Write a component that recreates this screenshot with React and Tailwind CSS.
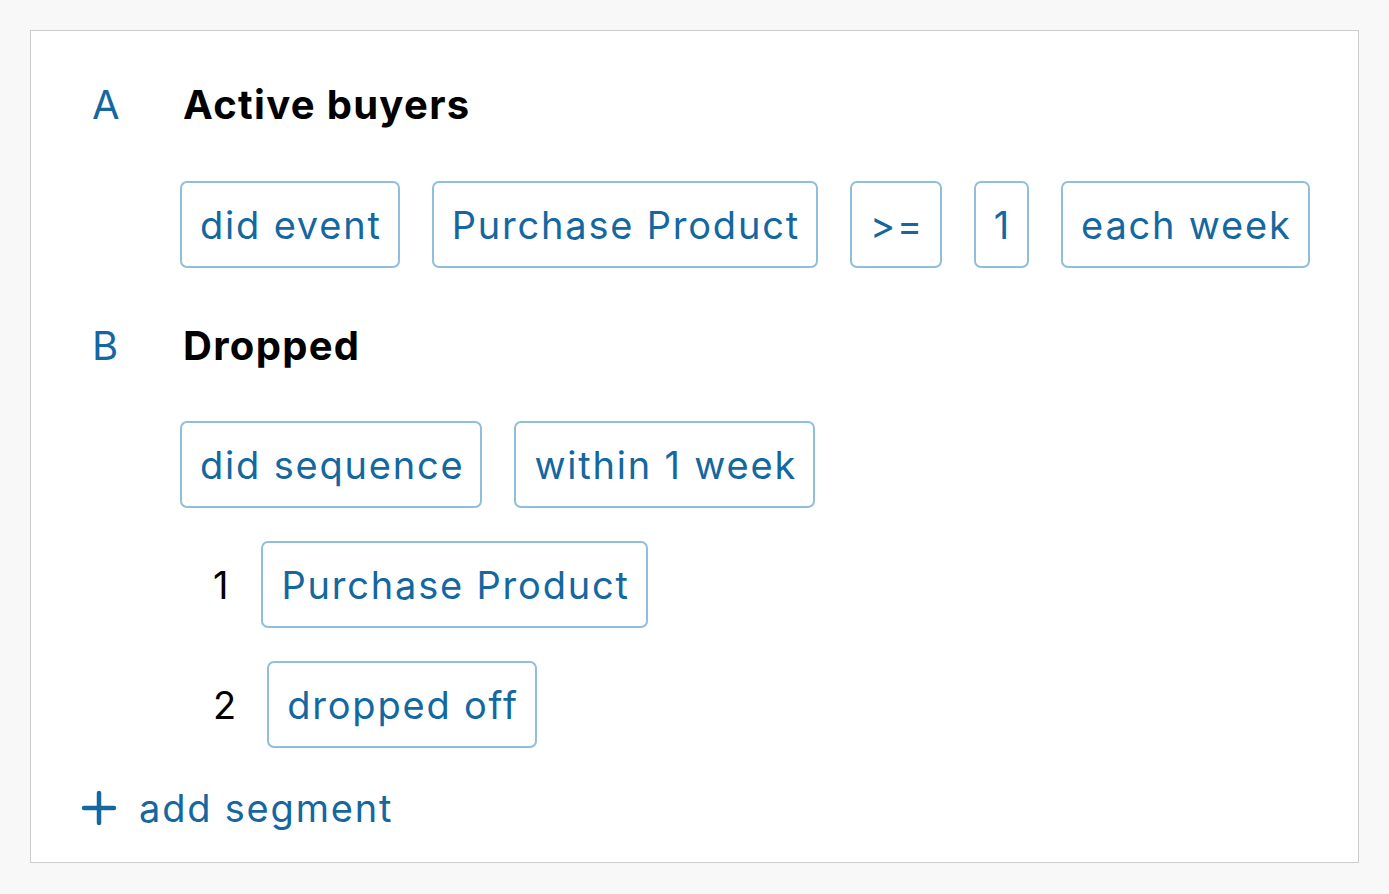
import React from "react";

const Chip = ({ children }) => (
  <div className="h-[87px] flex items-center pl-[18px] pr-[16px] border-2 border-[#90bfdd] rounded-[7px] text-[#15679f] text-[38px] tracking-[1.8px] leading-none whitespace-nowrap">
    {children}
  </div>
);

const Title = ({ letter, children }) => (
  <div className="flex items-center h-[50px]">
    <span className="shrink-0 w-[152px] pl-[61px] text-[#15679f] text-[40px] leading-none">{letter}</span>
    <span className="font-bold text-black text-[40px] tracking-[1.3px] leading-none">{children}</span>
  </div>
);

const Step = ({ num, children, pad }) => (
  <div className={`flex items-center ${pad}`}>
    <span className="text-black text-[38px] leading-none">{num}</span>
    <Chip>{children}</Chip>
  </div>
);

export default function App() {
  return (
    <div className="min-h-screen bg-[#f8f8f8] p-[30px] font-['Inter',sans-serif]">
      <div className="h-[833px] bg-white border border-[#cccccc] pt-[49px]">
        <Title letter="A">Active buyers</Title>
        <div className="flex gap-[32px] ml-[149px] mt-[51px]">
          <Chip>did event</Chip>
          <Chip>Purchase Product</Chip>
          <Chip>&gt;=</Chip>
          <Chip>1</Chip>
          <Chip>each week</Chip>
        </div>

        <div className="mt-[53px]">
          <Title letter="B">Dropped</Title>
        </div>
        <div className="flex gap-[32px] ml-[149px] mt-[50px]">
          <Chip>did sequence</Chip>
          <Chip>within 1 week</Chip>
        </div>

        <div className="ml-[182px] mt-[33px] flex flex-col gap-[33px]">
          <Step num="1" pad="gap-[33px]">Purchase Product</Step>
          <Step num="2" pad="gap-[31px]">dropped off</Step>
        </div>

        <div className="flex items-center h-[50px] mt-[35px] pl-[50px] gap-[22px] text-[#15679f]">
          <svg width="36" height="36" viewBox="0 0 36 36" fill="none" stroke="currentColor" strokeWidth="4.5" strokeLinecap="round">
            <path d="M18 3v30M3 18h30" />
          </svg>
          <span className="text-[38px] tracking-[1.8px] leading-none">add segment</span>
        </div>
      </div>
    </div>
  );
}
